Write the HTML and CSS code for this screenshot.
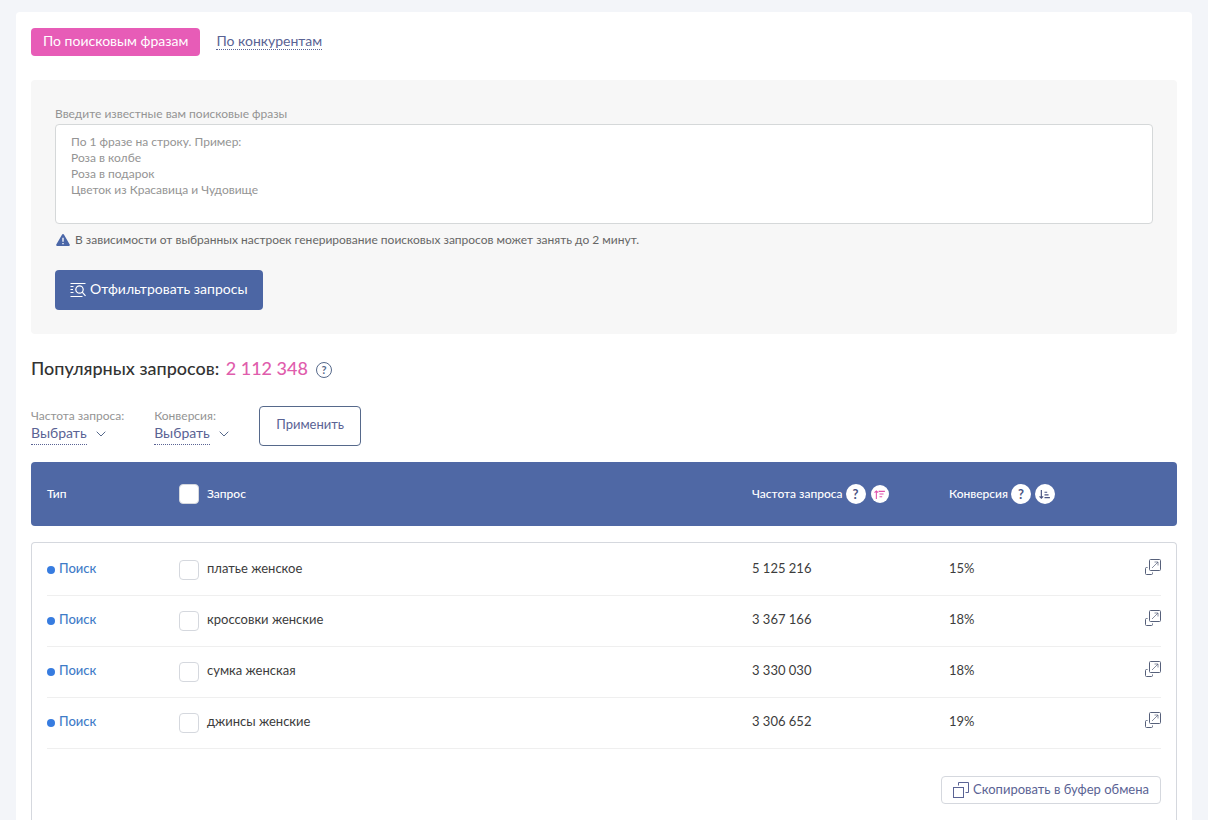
FILE: index.html
```html
<!DOCTYPE html>
<html lang="ru">
<head>
<meta charset="utf-8">
<meta name="viewport" content="width=device-width, initial-scale=1">
<title>Подбор запросов</title>
<link rel="stylesheet" href="styles.css">
</head>
<body>
<svg class="sprite" aria-hidden="true">
  <symbol id="open" viewBox="0 0 16 16"><g fill="none" stroke="currentColor"><rect x="4.500" y=".5" width="11" height="11" rx="1"/><path d="M2.500 8.500h-1a1 1 0 0 0-1 1v5a1 1 0 0 0 1 1h5a1 1 0 0 0 1-1v-1"/><path d="M7 9l6-6M9.500 3H13v3.500" stroke-width=".7"/></g></symbol>
  <symbol id="chevron" viewBox="0 0 10 6"><path d="M.7.7 5 5 9.300.7" fill="none" stroke="currentColor"/></symbol>
</svg>
<main class="card">
  <nav class="tabs">
    <a class="tab tab-active" href="#phrases" aria-current="page">По поисковым фразам</a>
    <a class="tab-link" href="#competitors">По конкурентам</a>
  </nav>

  <form class="panel">
    <label class="panel-label" for="phrases">Введите известные вам поисковые фразы</label>
    <textarea class="phrases" id="phrases" placeholder="По 1 фразе на строку. Пример:
Роза в колбе
Роза в подарок
Цветок из Красавица и Чудовище"></textarea>
    <p class="note">
      <svg width="14" height="12" viewBox="0 0 14 12" aria-hidden="true"><path d="M6.100.6a1 1 0 0 1 1.800 0l5.800 9.900a1 1 0 0 1-.9 1.500H1.200a1 1 0 0 1-.9-1.500z" fill="#4b67a8"/><path d="M7 3.800v4M7 9v1.300" stroke="#fff" stroke-width="1.300"/></svg>
      <span>В зависимости от выбранных настроек генерирование поисковых запросов может занять до 2 минут.</span>
    </p>
    <button class="submit" type="button">
      <svg width="16" height="16" viewBox="0 0 16 16" fill="none" stroke="currentColor" aria-hidden="true"><path d="M.5 1.500h15M.5 4.500h3M.5 7.500h2.500M.5 10.500h3M.5 14.500h12"/><g stroke-width="1.200"><circle cx="9.500" cy="7.500" r="3.700"/><path d="M12.200 10.200l3.300 3.600"/></g></svg>
      <span class="raised">Отфильтровать запросы</span>
    </button>
  </form>

  <h1 class="title"><span class="raised">Популярных запросов: <span class="total">2 112 348</span></span>
    <button class="help" type="button" aria-label="Справка">?</button>
  </h1>

  <form class="filters">
    <div class="filter">
      <label class="filter-label" for="freq">Частота запроса:</label>
      <div class="picker"><select class="select" id="freq"><option>Выбрать</option></select><svg class="chevron" aria-hidden="true"><use href="#chevron"/></svg></div>
    </div>
    <div class="filter">
      <label class="filter-label" for="conv">Конверсия:</label>
      <div class="picker"><select class="select" id="conv"><option>Выбрать</option></select><svg class="chevron" aria-hidden="true"><use href="#chevron"/></svg></div>
    </div>
    <button class="apply" type="button">Применить</button>
  </form>

  <table class="queries">
    <thead>
      <tr>
        <th>Тип</th>
        <th><label class="check"><input type="checkbox">Запрос</label></th>
        <th><span class="heading">Частота запроса</span>
          <button class="round" type="button" aria-label="Справка">?</button>
          <button class="round round-sorted" type="button" aria-label="Сортировать по частоте"><svg width="11" height="9" viewBox="0 0 12 10" fill="none" stroke="currentColor" stroke-width="1.200" aria-hidden="true"><path d="M2.500 10V1M.5 3l2-2 2 2M5 1.500h7M6 4.500h4.500M6 7.500h3"/></svg></button>
        </th>
        <th><span class="heading">Конверсия</span>
          <button class="round" type="button" aria-label="Справка">?</button>
          <button class="round" type="button" aria-label="Сортировать по конверсии"><svg width="11" height="9" viewBox="0 0 12 10" fill="none" stroke="currentColor" stroke-width="1.300" aria-hidden="true"><path d="M2.500 0v9M.5 7l2 2 2-2M6 2.500h3M6 5.500h4.500M6 8.500h6"/></svg></button>
        </th>
      </tr>
    </thead>
    <tbody>
      <tr><td class="type"><span class="dot"></span><span class="raised">Поиск</span></td><td><label class="check"><input type="checkbox"><span class="raised">платье женское</span></label></td><td>5 125 216</td><td>15%</td><td class="action"><a href="#q1" aria-label="Открыть"><svg class="icon"><use href="#open"/></svg></a></td></tr>
      <tr><td class="type"><span class="dot"></span><span class="raised">Поиск</span></td><td><label class="check"><input type="checkbox"><span class="raised">кроссовки женские</span></label></td><td>3 367 166</td><td>18%</td><td class="action"><a href="#q2" aria-label="Открыть"><svg class="icon"><use href="#open"/></svg></a></td></tr>
      <tr><td class="type"><span class="dot"></span><span class="raised">Поиск</span></td><td><label class="check"><input type="checkbox"><span class="raised">сумка женская</span></label></td><td>3 330 030</td><td>18%</td><td class="action"><a href="#q3" aria-label="Открыть"><svg class="icon"><use href="#open"/></svg></a></td></tr>
      <tr><td class="type"><span class="dot"></span><span class="raised">Поиск</span></td><td><label class="check"><input type="checkbox"><span class="raised">джинсы женские</span></label></td><td>3 306 652</td><td>19%</td><td class="action"><a href="#q4" aria-label="Открыть"><svg class="icon"><use href="#open"/></svg></a></td></tr>
    </tbody>
    <tfoot>
      <tr><td colspan="5"><button class="copy" type="button"><svg class="icon" viewBox="0 0 16 16" fill="none" stroke="currentColor" aria-hidden="true"><rect x=".5" y="5.500" width="10" height="10"/><path d="M5.500 3.500v-3h10v10h-3"/></svg><span class="raised">Скопировать в буфер обмена</span></button></td></tr>
    </tfoot>
  </table>
</main>
</body>
</html>
```
FILE: styles.css
```css
* { box-sizing: border-box; }

body {
  margin: 0;
  padding: 12px 16px 0;
  background: #f3f5f9;
  color: #3c3c3c;
  font: 14px/20px Lato, "Open Sans", sans-serif;
}

button, select, textarea { font: inherit; }
button { cursor: pointer; }
a { text-decoration: none; }
.sprite { display: none; }
.raised { padding-bottom: 2px; }

.card {
  padding: 16px 15px;
  border-radius: 4px;
  background: #fff;
}

.tabs { display: flex; align-items: center; gap: 16px; }
.tab { padding: 3px 12px 5px; border-radius: 4px; }
.tab-active { background: #e75cb7; color: #fff; }
.tab-link {
  margin-bottom: 2px;
  border-bottom: 1px dotted #5a6394;
  color: #5a6394;
  line-height: 16px;
}

.panel {
  margin-top: 24px;
  padding: 24px;
  border-radius: 4px;
  background: #f7f7f7;
}
.panel-label {
  display: block;
  color: #949494;
  font-size: 12px;
}
.phrases {
  display: block;
  width: 100%;
  height: 100px;
  padding: 9px 15px;
  border: 1px solid #d5d8d9;
  border-radius: 4px;
  background: #fff;
  font-size: 12px;
  line-height: 16px;
  resize: none;
}
.phrases::placeholder { color: #949494; opacity: 1; }
.note {
  display: flex;
  align-items: center;
  gap: 5px;
  margin: 6px 0 20px;
  padding-left: 1px;
  color: #666;
  font-size: 12px;
}
.submit {
  display: inline-flex;
  align-items: center;
  gap: 4px;
  height: 40px;
  padding: 0 15px;
  border: 0;
  border-radius: 4px;
  background: #4c66a4;
  color: #fff;
}

.title {
  display: flex;
  align-items: center;
  gap: 8px;
  margin: 22px 0 0;
  color: #333;
  font-size: 18px;
  font-weight: 500;
  line-height: 24px;
}
.total { margin-left: 2px; color: #df5dac; }
.help {
  width: 16px;
  height: 16px;
  margin-top: 2px;
  padding: 0;
  border: 1px solid #56698b;
  border-radius: 50%;
  background: none;
  color: #56698b;
  font-size: 11px;
  font-weight: 700;
  line-height: 14px;
}

.filters {
  display: flex;
  align-items: flex-start;
  gap: 30px;
  margin-top: 24px;
}
.filter-label {
  display: block;
  color: #949494;
  font-size: 12px;
}
.picker { display: flex; align-items: center; gap: 9px; }
.select {
  margin-top: -1px;
  padding: 0 0 3px;
  border: 0;
  border-bottom: 1px dotted #5a6394;
  background: none;
  color: #5a6394;
  line-height: 16px;
  appearance: none;
}
.chevron { width: 10px; height: 6px; margin-bottom: 3px; color: #56698b; }
.apply {
  height: 40px;
  padding: 0 16px 4px;
  border: 1px solid #56698b;
  border-radius: 4px;
  background: #fff;
  color: #5a6394;
  font-size: 13px;
}

.queries, .queries thead, .queries tbody, .queries tfoot { display: block; }
.queries { margin-top: 16px; font-size: 13px; }
.queries thead tr, .queries tbody tr {
  display: grid;
  grid-template-columns: 132px 1fr 197px 160px 52px;
  align-items: center;
}
.queries th, .queries td { padding: 0; text-align: left; }
.queries th {
  display: flex;
  align-items: center;
  gap: 4px;
  font-size: 12px;
  font-weight: 500;
}
.heading { margin-right: -1px; }
.queries thead {
  margin-bottom: 16px;
  padding: 0 16px;
  border-radius: 4px;
  background: #4f68a5;
  color: #fff;
}
.queries thead tr { min-height: 64px; }
.queries tbody {
  padding: 2px 15px 0;
  border: 1px solid #d5d8de;
  border-bottom: 0;
  border-radius: 4px 4px 0 0;
}
.queries tbody tr {
  min-height: 51px;
  border-bottom: 1px solid #efefef;
}
.queries tbody td { padding-bottom: 4px; }
.queries tbody .type, .queries tbody td:nth-child(2) { display: flex; align-items: center; padding: 0; }
.queries tbody .raised { padding-bottom: 4px; }
.queries tfoot {
  padding: 27px 15px 32px;
  border: 1px solid #d5d8de;
  border-top: 0;
  border-radius: 0 0 4px 4px;
}
.queries tfoot tr { display: flex; justify-content: flex-end; }

.type { gap: 4px; color: #3f7cc8; font-weight: 500; }
.dot { width: 8px; height: 8px; border-radius: 50%; background: #377ce0; }
.check { display: inline-flex; align-items: center; gap: 8px; }
.check input {
  width: 20px;
  height: 20px;
  margin: 0;
  border: 1px solid #d5d8de;
  border-radius: 4px;
  background: #fff;
  appearance: none;
}
.queries tbody .action { display: flex; justify-content: flex-end; padding-bottom: 6px; }
.action a { display: flex; color: #56607a; }
.icon { width: 16px; height: 16px; }

.round {
  display: flex;
  align-items: center;
  justify-content: center;
  width: 20px;
  height: 20px;
  padding: 0;
  border: 0;
  border-radius: 50%;
  background: #fff;
  color: #4a5482;
  font-size: 13px;
  font-weight: 700;
}
.round-sorted { width: 18px; height: 18px; margin-left: 1px; color: #df4fab; }
.copy {
  display: flex;
  align-items: center;
  gap: 4px;
  height: 28px;
  padding: 0 11px;
  border: 1px solid #d5d8de;
  border-radius: 4px;
  background: #fff;
  color: #5a6394;
  font-size: 13px;
}
.copy .raised { padding-bottom: 3px; }
```
